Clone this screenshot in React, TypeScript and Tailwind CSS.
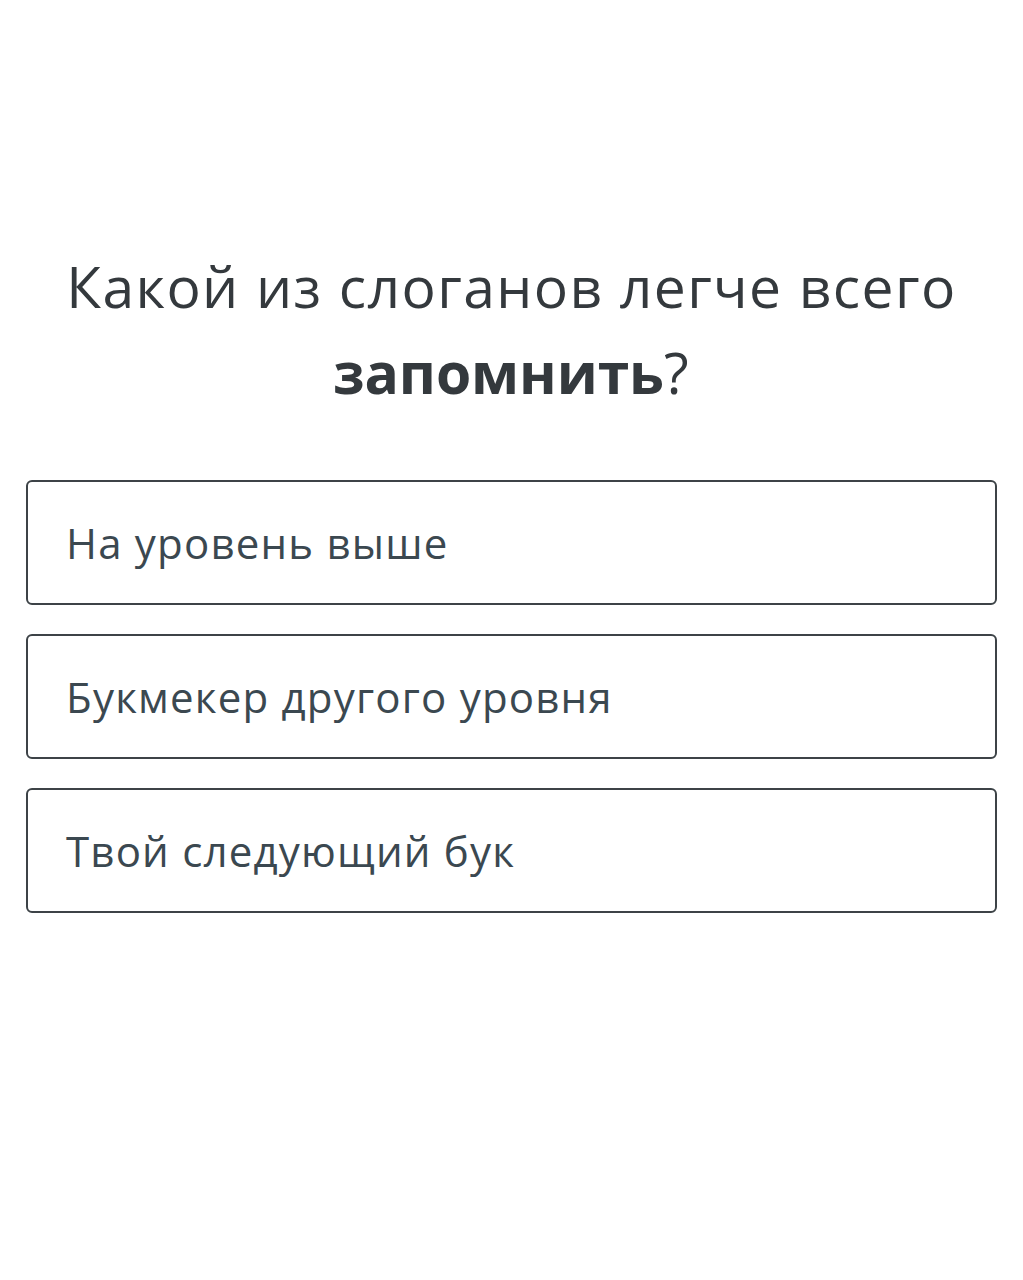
export default function App() {
  const options = ["На уровень выше", "Букмекер другого уровня", "Твой следующий бук"];
  return (
    <div className="w-[1023px] h-[1280px] bg-white flex flex-col items-center" style={{ fontFamily: '"Open Sans", "Noto Sans", sans-serif' }}>
      <h1 className="mt-[243px] text-center text-[57px] leading-[86px] font-normal text-[#34393d] tracking-[1.4px]">
        Какой из слоганов легче всего
        <br />
        <span className="font-bold tracking-[-0.1px]">запомнить</span>?
      </h1>
      <div className="mt-[65px] w-[971px] flex flex-col gap-[29px]">
        {options.map((o) => (
          <div key={o} className="h-[125px] border-2 border-[#3d4347] rounded-[6px] flex items-center pl-[38px]">
            <span className="text-[42px] text-[#3b4850] tracking-[1.2px]">{o}</span>
          </div>
        ))}
      </div>
    </div>
  );
}
